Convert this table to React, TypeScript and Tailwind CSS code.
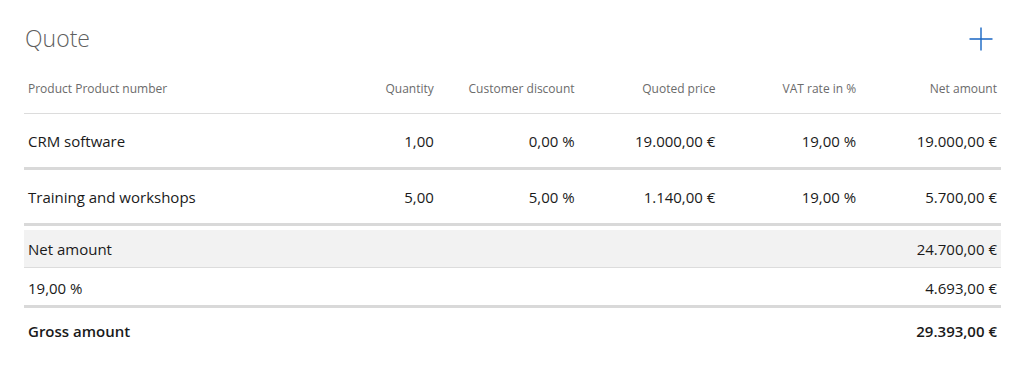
import React from 'react';

type Line = {
  name: string;
  quantity: string;
  discount: string;
  price: string;
  vat: string;
  net: string;
};

const lines: Line[] = [
  { name: 'CRM software', quantity: '1,00', discount: '0,00 %', price: '19.000,00 €', vat: '19,00 %', net: '19.000,00 €' },
  { name: 'Training and workshops', quantity: '5,00', discount: '5,00 %', price: '1.140,00 €', vat: '19,00 %', net: '5.700,00 €' },
];

const headers = ['Quantity', 'Customer discount', 'Quoted price', 'VAT rate in %', 'Net amount'];

const cols = 'grid grid-cols-[273px_repeat(5,minmax(0,1fr))] items-center';

const App = () => {
  return (
    <div className="w-[1025px] h-[377px] bg-white px-6 pt-[15px] text-[#1a1a1a]" style={{ fontFamily: '"Open Sans", "Noto Sans", sans-serif' }}>
      {/* title + add button */}
      <div className="flex items-center justify-between h-[50px]">
        <h2 className="text-[23px] font-light text-[#5f5f5f] leading-none pl-[1px] -mt-[4px]">Quote</h2>
        <button className="mr-[8px] -mt-[2px] w-[24px] h-[24px] flex items-center justify-center" aria-label="Add">
          <svg width="24" height="24" viewBox="0 0 24 24">
            <path d="M12 0.5V23.5M0.5 12H23.5" stroke="#1866c4" strokeWidth="1.4" fill="none" />
          </svg>
        </button>
      </div>

      {/* column headers */}
      <div className={`${cols} h-[49px] border-b border-[#dcdcdc] text-[12px] text-[#6b6b6b]`}>
        <div className="px-1">Product Product number</div>
        {headers.map((h) => (
          <div key={h} className="px-1 text-right">{h}</div>
        ))}
      </div>

      {/* product lines */}
      <div className="text-[15px]">
        {lines.map((l) => (
          <div key={l.name} className={`${cols} h-[56px] pt-[1px] border-b-[3px] border-[#d9d9d9]`}>
            <div className="px-1">{l.name}</div>
            <div className="px-1 text-right">{l.quantity}</div>
            <div className="px-1 text-right">{l.discount}</div>
            <div className="px-1 text-right">{l.price}</div>
            <div className="px-1 text-right">{l.vat}</div>
            <div className="px-1 text-right">{l.net}</div>
          </div>
        ))}

        {/* totals */}
        <div className="mt-[4px] flex items-center justify-between h-[38px] px-1 pt-[2px] bg-[#f2f2f2] border-b border-[#dcdcdc]">
          <span>Net amount</span>
          <span>24.700,00 €</span>
        </div>
        <div className="flex items-center justify-between h-[40px] px-1 pt-[4px] border-b-[3px] border-[#d9d9d9]">
          <span>19,00 %</span>
          <span>4.693,00 €</span>
        </div>
        <div className="flex items-center justify-between h-[46px] px-1 pt-[1px] font-semibold">
          <span>Gross amount</span>
          <span>29.393,00 €</span>
        </div>
      </div>
    </div>
  );
};

export default App;
